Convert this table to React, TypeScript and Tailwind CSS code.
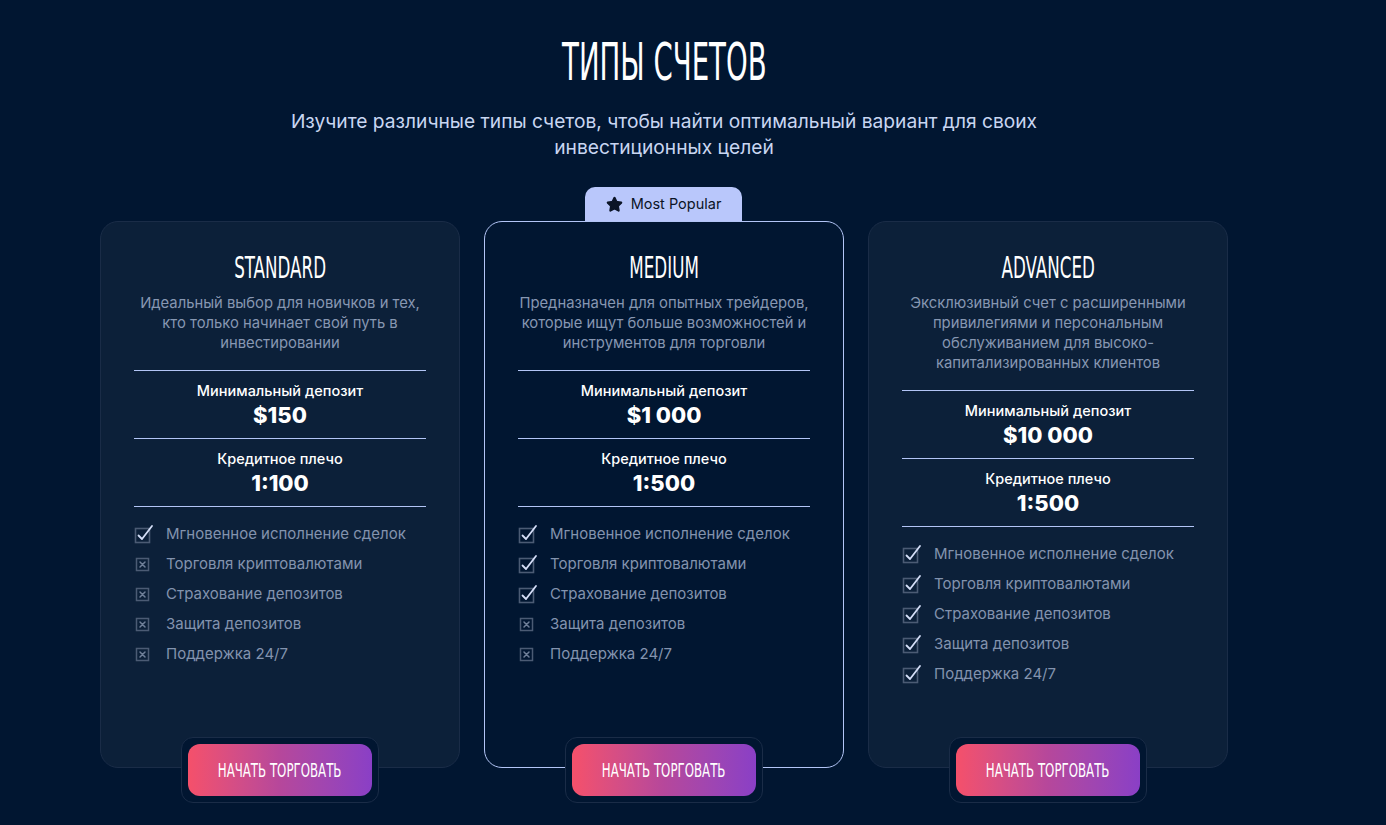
import { Star } from 'lucide-react';

type Plan = {
  name: string;
  description: string;
  deposit: string;
  leverage: string;
  features: Array<{ label: string; on: boolean }>;
  popular?: boolean;
};

const FEATURES = [
  'Мгновенное исполнение сделок',
  'Торговля криптовалютами',
  'Страхование депозитов',
  'Защита депозитов',
  'Поддержка 24/7',
];

const PLANS: Plan[] = [
  {
    name: 'STANDARD',
    description: 'Идеальный выбор для новичков и тех, кто только начинает свой путь в инвестировании',
    deposit: '$150',
    leverage: '1:100',
    features: FEATURES.map((label, i) => ({ label, on: i < 1 })),
  },
  {
    name: 'MEDIUM',
    description: 'Предназначен для опытных трейдеров, которые ищут больше возможностей и инструментов для торговли',
    deposit: '$1 000',
    leverage: '1:500',
    features: FEATURES.map((label, i) => ({ label, on: i < 3 })),
    popular: true,
  },
  {
    name: 'ADVANCED',
    description: 'Эксклюзивный счет с расширенными привилегиями и персональным обслуживанием для высоко-капитализированных клиентов',
    deposit: '$10 000',
    leverage: '1:500',
    features: FEATURES.map(label => ({ label, on: true })),
  },
];

const condensed = { fontFamily: '"DejaVu Sans", sans-serif', fontStretch: 'condensed' as const };

function CheckIcon({ on }: { on: boolean }) {
  if (on) {
    return (
      <svg width="22" height="20" viewBox="0 0 22 20" className="shrink-0">
        <rect x="1.5" y="4.5" width="14" height="14" fill="none" stroke="#4b5b74" strokeWidth="1.6" />
        <path d="M4.5 11.5 L8 15 L18 2" fill="none" stroke="#d4def7" strokeWidth="1.8" strokeLinecap="round" strokeLinejoin="round" />
      </svg>
    );
  }
  return (
    <svg width="22" height="20" viewBox="0 0 22 20" className="shrink-0">
      <rect x="2.5" y="4.5" width="12" height="12" fill="none" stroke="#4b5b74" strokeWidth="1.5" />
      <path d="M6 8 L11 13 M11 8 L6 13" fill="none" stroke="#6f7f98" strokeWidth="1.5" strokeLinecap="round" />
    </svg>
  );
}

function PlanCard({ plan }: { plan: Plan }) {
  return (
    <div className="relative flex flex-col">
      {plan.popular && (
        <div className="absolute -top-[34px] left-[101px] flex h-[34px] w-[157px] items-center justify-center gap-2 rounded-t-[10px] bg-[#b9c7fb] text-[14.5px] text-[#0b1426]">
          <Star className="h-[17px] w-[17px] fill-[#0b1426] text-[#0b1426]" strokeWidth={2} />
          <span>Most Popular</span>
        </div>
      )}
      <div
        className={`flex h-[547px] flex-col items-center rounded-[18px] border px-[33px] pt-[29px] ${
          plan.popular ? 'border-[#b3c5f6] bg-[#011631]' : 'border-[#1a2c47] bg-[#0c2039]'
        }`}
      >
        <h3 className="inline-block scale-x-[0.62] whitespace-nowrap text-[30px] leading-[34px] text-white" style={condensed}>{plan.name}</h3>
        <p className="mt-[8px] text-center text-[14.8px] leading-[20px] text-[#8797b2]">{plan.description}</p>
        <div className="mt-[17px] w-full border-t border-[#b3c5f6]" />
        <div className="flex h-[67px] w-full flex-col items-center justify-center">
          <span className="text-[14.5px] font-medium leading-[20px] text-white">Минимальный депозит</span>
          <span className="text-[22px] font-extrabold leading-[28px] text-white">{plan.deposit}</span>
        </div>
        <div className="w-full border-t border-[#b3c5f6]" />
        <div className="flex h-[67px] w-full flex-col items-center justify-center">
          <span className="text-[14.5px] font-medium leading-[20px] text-white">Кредитное плечо</span>
          <span className="text-[22px] font-extrabold leading-[28px] text-white">{plan.leverage}</span>
        </div>
        <div className="w-full border-t border-[#b3c5f6]" />
        <ul className="mt-[12px] flex w-full flex-col">
          {plan.features.map(f => (
            <li key={f.label} className="flex h-[30px] items-center gap-[10px] text-[15px] text-[#8393ae]">
              <CheckIcon on={f.on} />
              <span>{f.label}</span>
            </li>
          ))}
        </ul>
      </div>
      <div className="-mt-[31px] flex justify-center">
        <div className="rounded-[12px] border border-[#1a2c47] bg-[#011631] p-[6px]">
          <button
            type="button"
            className="flex h-[52px] w-[184px] items-center justify-center rounded-[12px] bg-gradient-to-r from-[#f5506a] via-[#b6479b] to-[#8a3fc6] text-white"
          >
            <span className="inline-block scale-x-[0.69] whitespace-nowrap text-[19px]" style={condensed}>НАЧАТЬ ТОРГОВАТЬ</span>
          </button>
        </div>
      </div>
    </div>
  );
}

export default function App() {
  return (
    <div className="min-h-[825px] bg-[#011631] pb-[24px]" style={{ fontFamily: 'Inter, "Noto Sans", sans-serif' }}>
      <div className="ml-[100px] w-[1128px] pt-[34px]">
        <h1 className="text-center text-white" style={condensed}>
          <span className="inline-block scale-x-[0.59] whitespace-nowrap text-[52px] leading-[56px]">ТИПЫ СЧЕТОВ</span>
        </h1>
        <p className="mx-auto mt-[18px] w-[780px] text-center text-[19.2px] leading-[26px] text-[#c9d6f2]">
          Изучите различные типы счетов, чтобы найти оптимальный вариант для своих инвестиционных целей
        </p>
        <div className="mt-[61px] grid grid-cols-3 gap-[24px]">
          {PLANS.map(plan => (
            <PlanCard key={plan.name} plan={plan} />
          ))}
        </div>
      </div>
    </div>
  );
}
